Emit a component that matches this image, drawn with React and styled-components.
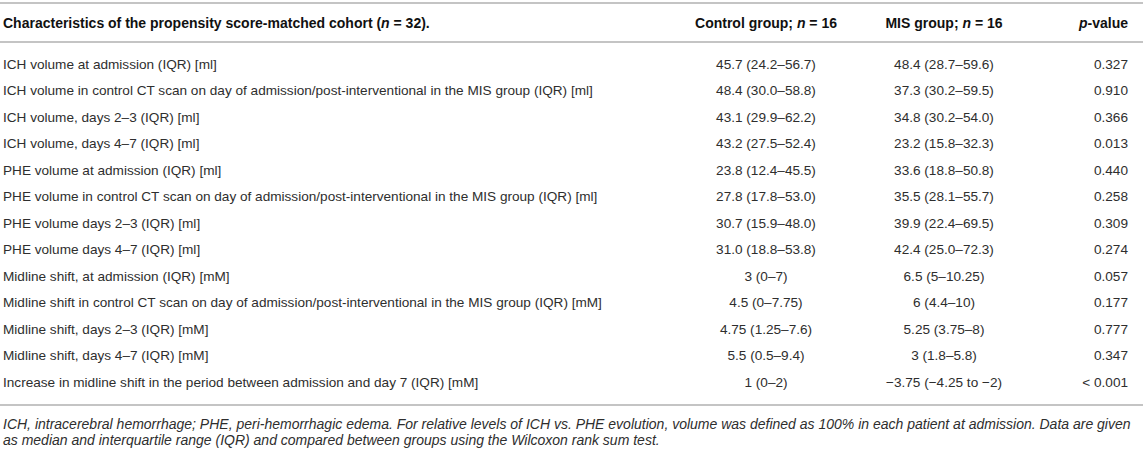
import React from 'react'
import styled, { createGlobalStyle } from 'styled-components'

const rows = [
    ['ICH volume at admission (IQR) [ml]', '45.7 (24.2–56.7)', '48.4 (28.7–59.6)', '0.327'],
    ['ICH volume in control CT scan on day of admission/post-interventional in the MIS group (IQR) [ml]', '48.4 (30.0–58.8)', '37.3 (30.2–59.5)', '0.910'],
    ['ICH volume, days 2–3 (IQR) [ml]', '43.1 (29.9–62.2)', '34.8 (30.2–54.0)', '0.366'],
    ['ICH volume, days 4–7 (IQR) [ml]', '43.2 (27.5–52.4)', '23.2 (15.8–32.3)', '0.013'],
    ['PHE volume at admission (IQR) [ml]', '23.8 (12.4–45.5)', '33.6 (18.8–50.8)', '0.440'],
    ['PHE volume in control CT scan on day of admission/post-interventional in the MIS group (IQR) [ml]', '27.8 (17.8–53.0)', '35.5 (28.1–55.7)', '0.258'],
    ['PHE volume days 2–3 (IQR) [ml]', '30.7 (15.9–48.0)', '39.9 (22.4–69.5)', '0.309'],
    ['PHE volume days 4–7 (IQR) [ml]', '31.0 (18.8–53.8)', '42.4 (25.0–72.3)', '0.274'],
    ['Midline shift, at admission (IQR) [mM]', '3 (0–7)', '6.5 (5–10.25)', '0.057'],
    ['Midline shift in control CT scan on day of admission/post-interventional in the MIS group (IQR) [mM]', '4.5 (0–7.75)', '6 (4.4–10)', '0.177'],
    ['Midline shift, days 2–3 (IQR) [mM]', '4.75 (1.25–7.6)', '5.25 (3.75–8)', '0.777'],
    ['Midline shift, days 4–7 (IQR) [mM]', '5.5 (0.5–9.4)', '3 (1.8–5.8)', '0.347'],
    ['Increase in midline shift in the period between admission and day 7 (IQR) [mM]', '1 (0–2)', '−3.75 (−4.25 to −2)', '< 0.001'],
]

function App() {
    return (
        <>
            <GlobalStyle />
            <Wrapper>
                <Table>
                    <thead>
                        <HeadRow>
                            <HeadCell>Characteristics of the propensity score-matched cohort (<i>n</i> = 32).</HeadCell>
                            <HeadCell $align="center">Control group; <i>n</i> = 16</HeadCell>
                            <HeadCell $align="center">MIS group; <i>n</i> = 16</HeadCell>
                            <HeadCell $align="right"><i>p</i>-value</HeadCell>
                        </HeadRow>
                    </thead>
                    <Body>
                        <Spacer $h={9}><td colSpan={4} /></Spacer>
                        {rows.map((r, i) => (
                            <Row key={i}>
                                <Cell>{r[0]}</Cell>
                                <Cell $align="center">{r[1]}</Cell>
                                <Cell $align="center">{r[2]}</Cell>
                                <Cell $align="right">{r[3]}</Cell>
                            </Row>
                        ))}
                        <Spacer $h={9}><td colSpan={4} /></Spacer>
                    </Body>
                </Table>
                <Footnote>
                    ICH, intracerebral hemorrhage; PHE, peri-hemorrhagic edema. For relative levels of ICH vs. PHE evolution, volume was defined as 100% in each patient at admission. Data are given as median and interquartile range (IQR) and compared between groups using the Wilcoxon rank sum test.
                </Footnote>
            </Wrapper>
        </>
    )
}

const GlobalStyle = createGlobalStyle`
    body {
        margin: 0;
        background: #fff;
        font-family: "Liberation Sans", Arial, sans-serif;
        color: #2e2e2e;
    }
`

const Wrapper = styled.div`
    width: 1143px;
    padding-top: 2px;
`

const Table = styled.table`
    width: 100%;
    border-collapse: collapse;
    font-size: 13.6px;
`

const HeadRow = styled.tr`
    border-top: 2px solid #c4c4c4;
    border-bottom: 2px solid #c4c4c4;
    height: 39px;
`

const HeadCell = styled.th`
    font-weight: bold;
    font-size: 14px;
    color: #111;
    text-align: ${p => p.$align || 'left'};
    padding: 0 3px;
    white-space: nowrap;
    &:nth-child(2) { width: 184px; }
    &:nth-child(3) { width: 160px; }
    &:nth-child(4) { width: 98px; padding-right: 15px; }
`

const Body = styled.tbody`
    border-bottom: 2px solid #c4c4c4;
`

const Spacer = styled.tr`
    height: ${p => p.$h}px;
    td { padding: 0; }
`

const Row = styled.tr`
    height: 26.5px;
`

const Cell = styled.td`
    text-align: ${p => p.$align || 'left'};
    padding: 0 3px;
    white-space: nowrap;
    &:nth-child(4) { padding-right: 15px; }
`

const Footnote = styled.p`
    margin: 10px 0 0;
    padding: 0 3px;
    font-size: 14px;
    line-height: 16.5px;
    font-style: italic;
    color: #2e2e2e;
`

export default App
